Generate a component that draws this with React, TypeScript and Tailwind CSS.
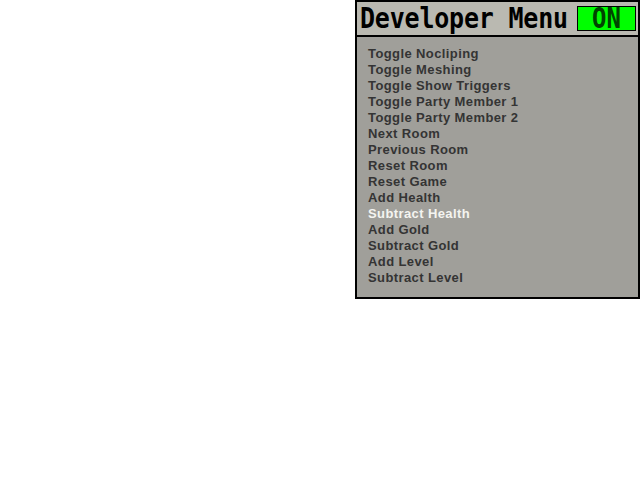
const items = [
  'Toggle Nocliping',
  'Toggle Meshing',
  'Toggle Show Triggers',
  'Toggle Party Member 1',
  'Toggle Party Member 2',
  'Next Room',
  'Previous Room',
  'Reset Room',
  'Reset Game',
  'Add Health',
  'Subtract Health',
  'Add Gold',
  'Subtract Gold',
  'Add Level',
  'Subtract Level',
]

const selected = 'Subtract Health'

export default function App() {
  return (
    <div className="w-[640px] h-[480px] bg-white flex justify-end items-start">
      <div className="w-[285px] h-[299px] border-2 border-black flex flex-col">
        {/* Header */}
        <div className="h-[35px] bg-[#bab9b1] border-b-2 border-black flex items-center justify-between pl-[3px] pr-[2px]">
          <span className="inline-block scale-y-115 font-['DejaVu_Sans_Mono',monospace] font-bold text-[25px] leading-none text-black tracking-[-0.2px]">
            Developer Menu
          </span>
          <span className="w-[59px] h-[25px] bg-[#00ff00] border border-black flex items-center justify-center">
            <span className="inline-block scale-y-115 font-['DejaVu_Sans_Mono',monospace] font-bold text-[24px] leading-none text-[#004400]">
              ON
            </span>
          </span>
        </div>

        {/* Items */}
        <div className="flex-1 bg-[#a09f9a] pt-[9px] pl-[11px]">
          {items.map((item) => (
            <div
              key={item}
              className={`h-[16px] font-['Liberation_Sans',Arial,sans-serif] text-[13px] font-bold leading-[16px] tracking-[0.4px] ${
                item === selected ? 'text-[#f4f4f0]' : 'text-[#343434]'
              }`}
            >
              {item}
            </div>
          ))}
        </div>
      </div>
    </div>
  )
}
